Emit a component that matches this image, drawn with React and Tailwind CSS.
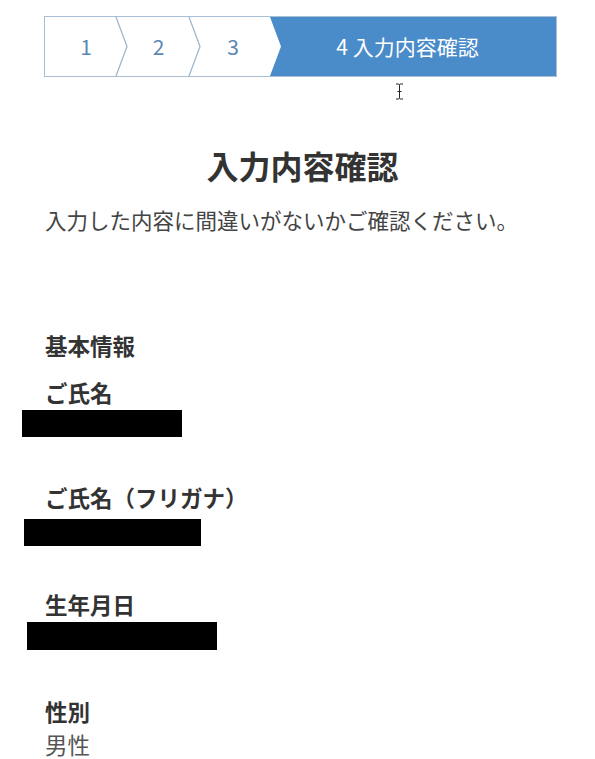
import React from "react";

const font = { fontFamily: '"Noto Sans CJK JP", "Noto Sans", sans-serif' };

function Chevron() {
  return (
    <svg className="absolute right-[-11px] top-0 h-full w-[12px] overflow-visible" viewBox="0 0 12 60" preserveAspectRatio="none">
      <polygon points="0,0 11,30 0,60 0,0" fill="#ffffff" />
      <polyline points="0,0 11,30 0,60" fill="none" stroke="#9fb7cf" strokeWidth="1.3" />
    </svg>
  );
}

function Stepper() {
  return (
    <div className="ml-[44px] mr-[38px] flex h-[61px] border border-[#a9bfd5] bg-white">
      <div className="relative z-30 flex w-[72px] items-center justify-center pl-[10px] text-[21px] text-[#5a87b5]">
        1
        <Chevron />
      </div>
      <div className="relative z-20 flex w-[73px] items-center justify-center pl-[10px] text-[21px] text-[#5a87b5]">
        2
        <Chevron />
      </div>
      <div className="relative z-10 flex w-[80px] items-center justify-center pl-[6px] text-[21px] text-[#5a87b5]">
        3
      </div>
      <div className="flex flex-1 items-center justify-center bg-[#4a8bc9] pr-[11px] text-[21px] text-white [clip-path:polygon(0_0,100%_0,100%_100%,0_100%,11px_50%)]">
        4 入力内容確認
      </div>
    </div>
  );
}

function Field({ label, children, className = "" }) {
  return (
    <div className={className}>
      <div className="text-[22.5px] font-bold leading-[30px] text-[#333]">{label}</div>
      {children}
    </div>
  );
}

export default function App() {
  return (
    <div className="relative min-h-[759px] w-[595px] bg-white pt-[16px]" style={font}>
      <Stepper />

      {/* mouse cursor */}
      <svg className="absolute left-[395px] top-[83px]" width="9" height="17" viewBox="0 0 9 17">
        <path d="M1 1 H3.5 Q4.5 1 4.5 2.5 V14.5 Q4.5 16 3.5 16 H1 M8 1 H5.5 Q4.5 1 4.5 2.5 M4.5 14.5 Q4.5 16 5.5 16 H8 M2.5 8.5 H6.5" fill="none" stroke="#222" strokeWidth="1" />
      </svg>

      <h1 className="mt-[68px] pl-[10px] text-center text-[32px] font-bold leading-[40px] text-[#333]">入力内容確認</h1>
      <p className="mt-[20px] px-[45px] text-[21.5px] leading-[30px] text-[#444]">
        入力した内容に間違いがないかご確認ください。
      </p>

      <div className="mt-[95px] px-[45px]">
        <h2 className="text-[22.5px] font-bold leading-[30px] text-[#333]">基本情報</h2>

        <Field label="ご氏名" className="mt-[17px]">
          <div className="mt-[3px] ml-[-23px] h-[27px] w-[160px] bg-black" />
        </Field>

        <Field label="ご氏名（フリガナ）" className="mt-[45px]">
          <div className="mt-[7px] ml-[-21px] h-[27px] w-[177px] bg-black" />
        </Field>

        <Field label="生年月日" className="mt-[43px]">
          <div className="mt-[3px] ml-[-18px] h-[28px] w-[190px] bg-black" />
        </Field>

        <Field label="性別" className="mt-[46px]">
          <div className="mt-[3px] text-[22.5px] leading-[30px] text-[#555]">男性</div>
        </Field>
      </div>
    </div>
  );
}
